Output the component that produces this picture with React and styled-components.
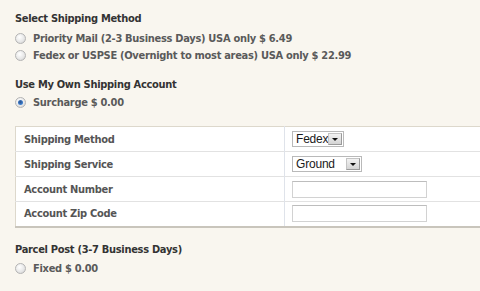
import React from "react";
import styled, { createGlobalStyle } from "styled-components";

const Global = createGlobalStyle`
  html, body {
    margin: 0;
    padding: 0;
    background: #f9f6ef;
  }
  body {
    font-family: "DejaVu Sans Condensed", "DejaVu Sans", sans-serif;
    font-size: 11px;
    font-weight: bold;
    letter-spacing: -0.3px;
    color: #555;
  }
`;

const Page = styled.div`
  padding: 10px 0 0 15px;
`;

const Section = styled.div`
  margin-bottom: ${(p) => p.$gap ?? 12}px;
`;

const Heading = styled.div`
  color: #333;
  line-height: 17px;
  margin-bottom: ${(p) => p.$mb ?? 2}px;
`;

const Option = styled.label`
  display: flex;
  align-items: center;
  gap: 7px;
  height: 17px;
  color: #5a5a5a;
`;

const Radio = styled.span`
  width: 9px;
  height: 9px;
  border-radius: 50%;
  border: 1px solid #b4b4b4;
  background: radial-gradient(circle at 40% 35%, #fff 0, #e6e6e6 60%, #cbcbcb 100%);
  display: flex;
  align-items: center;
  justify-content: center;
  flex: none;
  &::after {
    content: "";
    width: 5px;
    height: 5px;
    border-radius: 50%;
    background: radial-gradient(circle at 45% 40%, #2a4f8a 0, #3f83d4 70%, #7fb4ee 100%);
    display: ${(p) => (p.$checked ? "block" : "none")};
  }
`;

const Table = styled.table`
  border-collapse: collapse;
  background: #fff;
  width: calc(100% + 2px);
  margin-bottom: 13px;
  border-top: 1px solid #ddd8cc;
  border-left: 1px solid #ddd8cc;
  border-bottom: 2px solid #c9c5bc;
`;

const Row = styled.tr`
  height: 25px;
  & + & td {
    border-top: 1px solid #e2e2e2;
  }
`;

const Label = styled.td`
  width: 260px;
  padding: 0 0 0 8px;
  color: #555;
  border-right: 1px solid #dfe3ea;
`;

const Field = styled.td`
  padding: 0 0 0 7px;
`;

const SelectBox = styled.div`
  display: inline-flex;
  align-items: center;
  justify-content: space-between;
  width: ${(p) => p.$w}px;
  height: 16px;
  box-sizing: border-box;
  border: 1px solid #b9b9b9;
  background: #fff;
  font-family: "Liberation Sans", Arial, sans-serif;
  font-weight: normal;
  letter-spacing: -0.2px;
  font-size: 12px;
  color: #1a1a1a;
  padding: 0 1px 0 3px;
  vertical-align: middle;
`;

const Arrow = styled.span`
  width: 14px;
  height: 12px;
  box-sizing: border-box;
  border: 1px solid #9a9a9a;
  border-top-color: #c4c4c4;
  border-left-color: #c4c4c4;
  background: linear-gradient(#f2f2f2, #d4d4d4);
  display: flex;
  align-items: center;
  justify-content: center;
  flex: none;
  &::after {
    content: "";
    border-left: 3px solid transparent;
    border-right: 3px solid transparent;
    border-top: 3px solid #111;
  }
`;

const TextInput = styled.input`
  width: 135px;
  height: 17px;
  box-sizing: border-box;
  border: 1px solid #d2d2d2;
  border-top-color: #bdbdbd;
  background: #fff;
  vertical-align: middle;
  padding: 0;
`;

const methods = [
  { label: "Shipping Method", kind: "select", value: "Fedex", w: 52 },
  { label: "Shipping Service", kind: "select", value: "Ground", w: 70 },
  { label: "Account Number", kind: "input" },
  { label: "Account Zip Code", kind: "input" },
];

export default function App() {
  return (
    <Page>
      <Global />
      <Section>
        <Heading $mb={3}>Select Shipping Method</Heading>
        <Option>
          <Radio />
          Priority Mail (2-3 Business Days) USA only $ 6.49
        </Option>
        <Option>
          <Radio />
          Fedex or USPSE (Overnight to most areas) USA only $ 22.99
        </Option>
      </Section>
      <Section $gap={15}>
        <Heading $mb={1}>Use My Own Shipping Account</Heading>
        <Option>
          <Radio $checked />
          Surcharge $ 0.00
        </Option>
      </Section>
      <Table>
        <tbody>
          {methods.map((m) => (
            <Row key={m.label}>
              <Label>{m.label}</Label>
              <Field>
                {m.kind === "select" ? (
                  <SelectBox $w={m.w}>
                    {m.value}
                    <Arrow />
                  </SelectBox>
                ) : (
                  <TextInput type="text" />
                )}
              </Field>
            </Row>
          ))}
        </tbody>
      </Table>
      <Section $gap={0}>
        <Heading $mb={2}>Parcel Post (3-7 Business Days)</Heading>
        <Option>
          <Radio />
          Fixed $ 0.00
        </Option>
      </Section>
    </Page>
  );
}
